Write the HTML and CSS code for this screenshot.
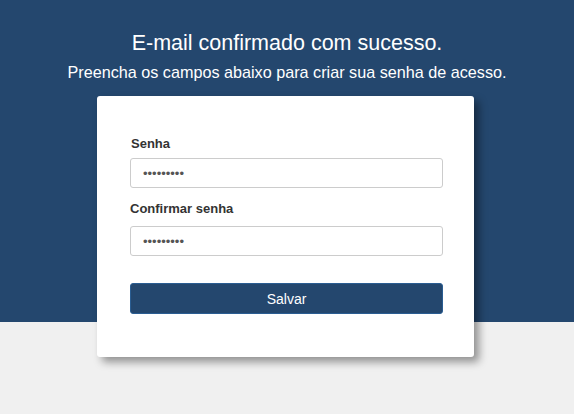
FILE: index.html
```html
<!DOCTYPE html>
<html lang="pt-BR">

<head>
    <meta charset="UTF-8">
    <meta name="viewport" content="width=device-width, initial-scale=1.0">
    <title>Criar senha</title>
    <link rel="stylesheet" href="styles.css">
</head>

<body>
    <div class="page">
        <header class="hero">
            <h1>E-mail confirmado com sucesso.</h1>
            <p>Preencha os campos abaixo para criar sua senha de acesso.</p>
        </header>

        <main class="card">
            <form class="senha-form">
                <label for="senha" class="label-senha">Senha</label>
                <input type="password" id="senha" value="123456789">

                <label for="confirmar" class="label-confirm">Confirmar senha</label>
                <input type="password" id="confirmar" value="123456789">

                <button type="button">Salvar</button>
            </form>
        </main>
    </div>
</body>

</html>
```

FILE: styles.css
```css
/* Reset */
body,
h1,
p {
    margin: 0;
    padding: 0;
}

body {
    font-family: Arial, "Liberation Sans", sans-serif;
    background-color: #f0f0f0;
}

.page {
    min-height: 414px;
    box-sizing: border-box;
    background: linear-gradient(to bottom, #24476e 322px, #f0f0f0 322px);
    padding-top: 31px;
}

.hero {
    text-align: center;
    color: #fff;
}

.hero h1 {
    font-size: 21.5px;
    font-weight: normal;
    line-height: 24px;
}

.hero p {
    font-size: 16.2px;
    line-height: 18px;
    margin-top: 8px;
}

.card {
    width: 377px;
    box-sizing: border-box;
    margin: 15px 0 0 97px;
    background-color: #fff;
    border-radius: 3px;
    padding: 40px 31px 43px 33px;
    box-shadow: 5px 5px 8px rgba(0, 0, 0, 0.4);
}

.senha-form {
    display: flex;
    flex-direction: column;
}

label {
    font-size: 13px;
    font-weight: bold;
    line-height: 15px;
    color: #333;
}

.label-senha {
    margin-bottom: 7px;
    margin-left: 1px;
}

.label-confirm {
    margin-top: 13px;
    margin-bottom: 10px;
}

input[type="password"] {
    height: 30px;
    box-sizing: border-box;
    padding: 0 12px;
    border: 1px solid #ccc;
    border-radius: 3px;
    font-size: 13px;
    color: #555;
}

button {
    margin-top: 27px;
    height: 31px;
    background-color: #24476e;
    color: #fff;
    border: 1px solid #2a5d92;
    border-radius: 3px;
    font-family: Arial, "Liberation Sans", sans-serif;
    font-size: 14px;
    cursor: pointer;
}
```
